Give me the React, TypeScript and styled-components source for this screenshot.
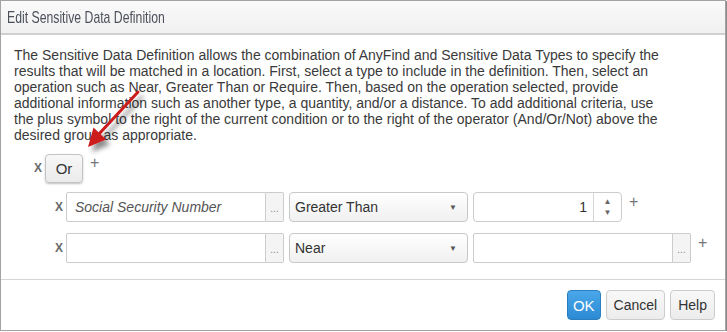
import React from 'react';
import styled, { createGlobalStyle } from 'styled-components';

const GlobalStyle = createGlobalStyle`
  body {
    margin: 0;
    background: #ffffff;
    font-family: 'Liberation Sans', Arial, sans-serif;
  }
`;

const CONDITIONS = [
  { type: 'Social Security Number', operator: 'Greater Than', kind: 'number', value: '1' },
  { type: '', operator: 'Near', kind: 'type', value: '' },
];

// Red callout arrow drawn over the dialog, pointing at the Or operator
const Arrow = () => (
  <ArrowLayer width="727" height="200" viewBox="0 0 727 200">
    <defs>
      <filter id="arrowShadow" x="-50%" y="-50%" width="200%" height="200%">
        <feDropShadow dx="4" dy="5" stdDeviation="2.5" floodColor="#000" floodOpacity="0.45" />
      </filter>
    </defs>
    <g filter="url(#arrowShadow)">
      <line x1="138" y1="92" x2="98" y2="135" stroke="#cc1a1a" strokeWidth="3" strokeLinecap="round" />
      <polygon points="88,147 93.5,127.5 106,139.5" fill="#cc1a1a" />
    </g>
  </ArrowLayer>
);

const ConditionRow = ({ type, operator, kind, value }: (typeof CONDITIONS)[number]) => (
  <Row $indent={41} $top={kind === 'number' ? 9 : 11}>
    <Remove>X</Remove>
    <InputGroup>
      <TextField $italic $width={200}>{type}</TextField>
      <Ellipsis>...</Ellipsis>
    </InputGroup>
    <Select>
      <span>{operator}</span>
      <Caret>▼</Caret>
    </Select>
    {kind === 'number' ? (
      <NumberField>
        <NumberValue>{value}</NumberValue>
        <Spinner>
          <span>▲</span>
          <span>▼</span>
        </Spinner>
      </NumberField>
    ) : (
      <InputGroup>
        <TextField $width={200} />
        <Ellipsis>...</Ellipsis>
      </InputGroup>
    )}
    <Plus>+</Plus>
  </Row>
);

const App = () => (
  <>
    <GlobalStyle />
    <Dialog>
      <Header>
        <Title>Edit Sensitive Data Definition</Title>
      </Header>
      <Body>
        <Description>
          The Sensitive Data Definition allows the combination of AnyFind and Sensitive Data Types to specify the
          <br />
          results that will be matched in a location. First, select a type to include in the definition. Then, select an
          <br />
          operation such as Near, Greater Than or Require. Then, based on the operation selected, provide
          <br />
          additional information such as another type, a quantity, and/or a distance. To add additional criteria, use
          <br />
          the plus symbol to the right of the current condition or to the right of the operator (And/Or/Not) above the
          <br />
          desired group as appropriate.
        </Description>
        <Row $indent={20} $top={10}>
          <Remove>X</Remove>
          <OperatorButton>Or</OperatorButton>
          <Plus>+</Plus>
        </Row>
        {CONDITIONS.map((c) => (
          <ConditionRow key={c.operator} {...c} />
        ))}
      </Body>
      <Footer>
        <PrimaryButton>OK</PrimaryButton>
        <Button>Cancel</Button>
        <Button>Help</Button>
      </Footer>
      <Arrow />
    </Dialog>
  </>
);

export default App;

const Dialog = styled.div`
  position: relative;
  width: 724px;
  height: 329px;
  border: 1px solid #a3a3a3;
  box-shadow: 1px 1px 0 #8a8a8a;
  display: flex;
  flex-direction: column;
  background: #fff;
  overflow: hidden;
`;

const Header = styled.div`
  height: 32px;
  display: flex;
  align-items: center;
  padding-left: 6px;
  background: linear-gradient(#fafafa, #f0f0f0);
  border-bottom: 2px solid #d0d0d0;
`;

const Title = styled.div`
  font-size: 17px;
  color: #4c505b;
  padding-top: 1px;
  transform: scaleX(0.72);
  transform-origin: left center;
  white-space: nowrap;
`;

const Body = styled.div`
  flex: 1;
  padding: 12px 13px 0;
`;

const ArrowLayer = styled.svg`
  position: absolute;
  left: -1px;
  top: -1px;
  pointer-events: none;
`;

const Description = styled.p`
  margin: 0;
  font-size: 14px;
  line-height: 16px;
  color: #3a3a3a;
  white-space: nowrap;
`;

const Row = styled.div<{ $indent: number; $top: number }>`
  height: 30px;
  display: flex;
  align-items: center;
  gap: 5px;
  margin-top: ${(p) => p.$top}px;
  padding-left: ${(p) => p.$indent}px;
`;

const Remove = styled.span`
  width: 7px;
  margin-right: -1px;
  font-size: 12px;
  font-weight: bold;
  color: #6a6a6a;
`;

const Plus = styled.span`
  margin-left: 2px;
  font-size: 16px;
  color: #777;
  line-height: 16px;
  align-self: flex-start;
  padding-top: 2px;
`;

const OperatorButton = styled.div`
  box-sizing: border-box;
  width: 38px;
  height: 29px;
  display: flex;
  align-items: center;
  justify-content: center;
  font-size: 15px;
  color: #333;
  background: linear-gradient(#f7f7f7, #ebebeb);
  border: 1px solid #c4c4c4;
  border-radius: 4px;
  box-shadow: 0 1px 2px rgba(0, 0, 0, 0.25);
`;

const InputGroup = styled.div`
  display: flex;
  height: 30px;
`;

const TextField = styled.div<{ $italic?: boolean; $width: number }>`
  box-sizing: border-box;
  width: ${(p) => p.$width}px;
  height: 30px;
  display: flex;
  align-items: center;
  padding: 0 8px;
  border: 1px solid #cccccc;
  border-radius: 2px 0 0 2px;
  font-size: 14px;
  font-style: ${(p) => (p.$italic ? 'italic' : 'normal')};
  color: #555;
  background: #fff;
`;

const Ellipsis = styled.div`
  box-sizing: border-box;
  width: 18px;
  height: 30px;
  display: flex;
  align-items: flex-end;
  justify-content: center;
  padding-bottom: 7px;
  border: 1px solid #cccccc;
  border-left: none;
  border-radius: 0 2px 2px 0;
  background: #f4f4f4;
  font-size: 10px;
  color: #888;
`;

const Select = styled.div`
  box-sizing: border-box;
  width: 179px;
  height: 30px;
  display: flex;
  align-items: center;
  justify-content: space-between;
  padding: 0 10px 0 5px;
  border: 1px solid #c8c8c8;
  border-radius: 4px;
  background: linear-gradient(#ffffff, #f0f0f0);
  font-size: 14px;
  color: #333;
`;

const Caret = styled.span`
  font-size: 8px;
  color: #555;
`;

const NumberField = styled.div`
  box-sizing: border-box;
  width: 149px;
  height: 30px;
  display: flex;
  border: 1px solid #cccccc;
  border-radius: 4px;
  background: #fff;
`;

const NumberValue = styled.div`
  flex: 1;
  display: flex;
  align-items: center;
  justify-content: flex-end;
  padding-right: 6px;
  font-size: 14px;
  color: #333;
`;

const Spinner = styled.div`
  width: 27px;
  display: flex;
  flex-direction: column;
  align-items: center;
  justify-content: center;
  gap: 2px;
  border-left: 1px solid #d6d6d6;
  font-size: 8px;
  line-height: 9px;
  color: #666;
`;

const Footer = styled.div`
  height: 50px;
  display: flex;
  align-items: center;
  justify-content: flex-end;
  gap: 5px;
  padding-right: 10px;
  border-top: 1px solid #d4d4d4;
`;

const Button = styled.div`
  box-sizing: border-box;
  height: 30px;
  display: flex;
  align-items: center;
  padding: 0 7px;
  border: 1px solid #cccccc;
  border-radius: 4px;
  background: linear-gradient(#f8f8f8, #ececec);
  font-size: 14px;
  color: #333;
`;

const PrimaryButton = styled(Button)`
  padding: 0 5px;
  border-color: #2a7fc0;
  background: linear-gradient(#4aa7ea, #2b8ad3);
  color: #fff;
  font-size: 15px;
`;
